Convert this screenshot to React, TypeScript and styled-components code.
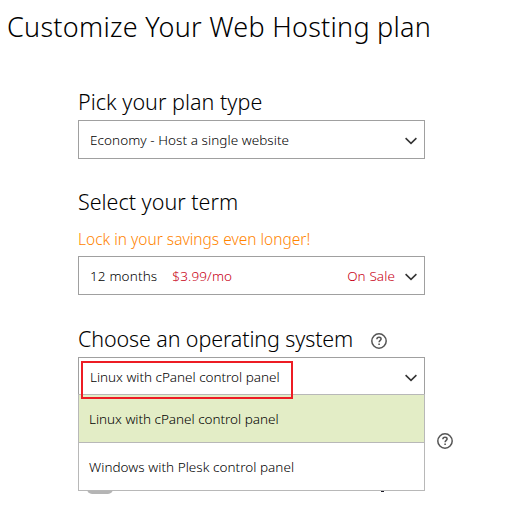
import React from 'react';
import styled, { createGlobalStyle } from 'styled-components';

const GlobalStyle = createGlobalStyle`
  * { box-sizing: border-box; }
  body {
    margin: 0;
    background: #fff;
    color: #000;
    font-family: "Noto Sans", "Open Sans", sans-serif;
    font-weight: 300;
  }
`;

const Page = styled.main`
  height: 531px;
  overflow: hidden;
`;

const Title = styled.h1`
  margin: 0;
  padding: 6px 0 0 7px;
  font-size: 27px;
  font-weight: 300;
  line-height: 41px;
  letter-spacing: 0.26px;
  white-space: nowrap;
`;

const Form = styled.div`
  width: 347px;
  margin: 40px 0 0 78px;
`;

const Field = styled.section<{ $gap?: number }>`
  position: relative;
  margin-top: ${p => p.$gap ?? 0}px;
`;

const Heading = styled.h2<{ $spacing?: number; $below?: number }>`
  display: flex;
  align-items: center;
  gap: 18px;
  margin: 0;
  padding-bottom: ${p => p.$below ?? 3}px;
  font-size: 21.5px;
  font-weight: 300;
  line-height: 30px;
  letter-spacing: ${p => p.$spacing ?? 0}px;
  white-space: nowrap;
`;

const Hint = styled.p`
  margin: 0;
  height: 29px;
  padding-top: 1px;
  font-size: 15.5px;
  line-height: 22px;
  color: #ff8400;
  white-space: nowrap;
`;

const SelectBox = styled.div<{ $open?: boolean }>`
  display: flex;
  align-items: center;
  height: ${p => (p.$open ? 37 : 39)}px;
  padding: ${p => (p.$open ? 1 : 0)}px 7px 0 11px;
  border: 1px solid #a0a0a0;
  border-bottom-width: ${p => (p.$open ? 0 : 1)}px;
  background: #fff;
  font-size: 13.5px;
  line-height: 20px;
  white-space: nowrap;
`;

const Value = styled.span<{ $spacing?: number }>`
  letter-spacing: ${p => p.$spacing ?? 0}px;
`;

const Price = styled.span`
  margin-left: 15px;
  color: #c80014;
  letter-spacing: 0.13px;
`;

const Sale = styled.span`
  margin-left: auto;
  margin-right: 10px;
  color: #c80014;
  letter-spacing: 0.1px;
`;

const ChevronSvg = styled.svg<{ $push?: boolean }>`
  display: block;
  flex: none;
  margin-left: ${p => (p.$push ? 'auto' : '0')};
  margin-top: 3px;
`;

const Chevron = ({ push = true }: { push?: boolean }) => (
  <ChevronSvg $push={push} width="12" height="8" viewBox="0 0 12 8" fill="none">
    <path d="M0.6 1.1L6 6.4L11.4 1.1" stroke="#333" strokeWidth="1.5" />
  </ChevronSvg>
);

const HelpSvg = styled.svg`
  display: block;
  flex: none;
`;

const Help = () => (
  <HelpSvg width="16" height="16" viewBox="0 0 16 16" fill="none" stroke="#555">
    <circle cx="8" cy="8" r="7.2" strokeWidth="1.5" />
    <path d="M5.9 6.2C5.9 4.9 6.8 4.3 8 4.3C9.3 4.3 10.1 5 10.1 6C10.1 7.4 8.1 7.5 8.1 9.3" strokeWidth="1.5" />
    <path d="M8.1 10.4V12" strokeWidth="1.6" />
  </HelpSvg>
);

const HeadingHelp = styled.span`
  padding-top: 4px;
`;

const Menu = styled.ul`
  position: absolute;
  top: 100%;
  left: 0;
  z-index: 1;
  width: 100%;
  margin: 0;
  padding: 0;
  list-style: none;
  border: 1px solid #b8b8b8;
  background: #fff;
`;

const Option = styled.li<{ $active?: boolean }>`
  display: flex;
  align-items: center;
  height: ${p => (p.$active ? 48 : 47)}px;
  padding-left: 10px;
  background: ${p => (p.$active ? '#e3edc6' : '#fff')};
  border-bottom: ${p => (p.$active ? '1px solid #b8b8b8' : '0')};
  font-size: 13.5px;
  line-height: 20px;
  letter-spacing: ${p => (p.$active ? -0.02 : 0.04)}px;
  white-space: nowrap;
`;

const Highlight = styled.div`
  position: absolute;
  z-index: 2;
  left: 3px;
  bottom: -5px;
  width: 212px;
  height: 38px;
  border: 2px solid #ed1c24;
`;

const HelpRow = styled.div`
  display: flex;
  justify-content: flex-end;
  margin: 39px -28px 0 0;
`;

const CoveredRow = styled.div`
  display: flex;
  justify-content: space-between;
  align-items: flex-end;
  height: 45px;
  padding: 0 41px 0 9px;
`;

const Toggle = styled.span`
  width: 26px;
  height: 14px;
  border-radius: 5px;
  background: #b5b5b5;
`;

const Descender = styled.span`
  width: 3px;
  height: 1px;
  margin-bottom: 2px;
  background: #1c1c28;
`;

export default function App() {
  return (
    <Page>
      <GlobalStyle />
      <Title>Customize Your Web Hosting plan</Title>
      <Form>
        <Field>
          <Heading $spacing={0.03}>Pick your plan type</Heading>
          <SelectBox>
            <Value $spacing={0.06}>Economy - Host a single website</Value>
            <Chevron />
          </SelectBox>
        </Field>
        <Field $gap={28}>
          <Heading $below={10}>Select your term</Heading>
          <Hint>Lock in your savings even longer!</Hint>
          <SelectBox>
            <Value $spacing={0.15}>12 months</Value>
            <Price>$3.99/mo</Price>
            <Sale>On Sale</Sale>
            <Chevron push={false} />
          </SelectBox>
        </Field>
        <Field $gap={29}>
          <Heading $spacing={-0.12}>
            Choose an operating system
            <HeadingHelp>
              <Help />
            </HeadingHelp>
          </Heading>
          <SelectBox $open>
            <Value $spacing={-0.02}>Linux with cPanel control panel</Value>
            <Chevron />
          </SelectBox>
          <Highlight />
          <Menu>
            <Option $active>Linux with cPanel control panel</Option>
            <Option>Windows with Plesk control panel</Option>
          </Menu>
        </Field>
        <HelpRow>
          <Help />
        </HelpRow>
        <CoveredRow>
          <Toggle />
          <Descender />
        </CoveredRow>
      </Form>
    </Page>
  );
}
